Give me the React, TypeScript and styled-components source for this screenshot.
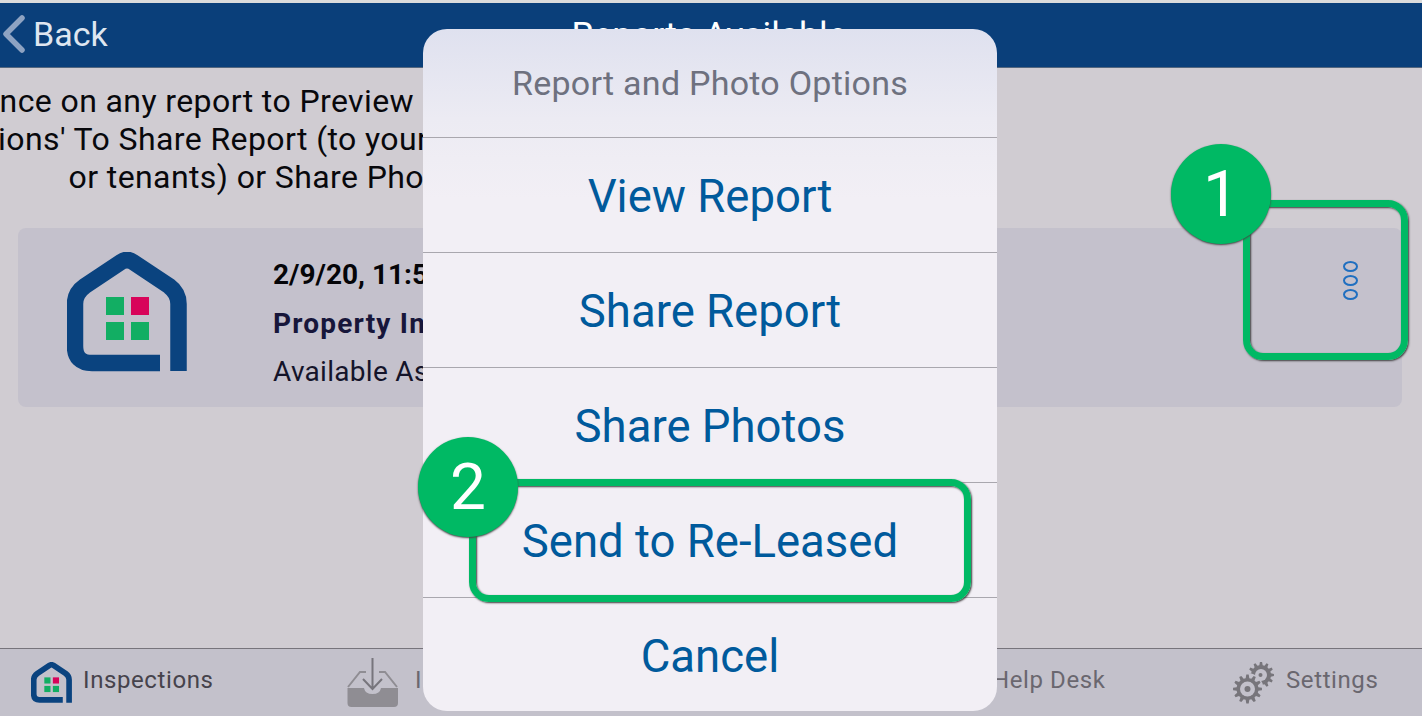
import React from 'react'
import styled, { createGlobalStyle } from 'styled-components'

const menuItems = ['View Report', 'Share Report', 'Share Photos', 'Send to Re-Leased', 'Cancel']

const gearPath = (cx: number, cy: number, outer: number, inner: number, teeth: number) => {
    const step = (Math.PI * 2) / teeth
    const points: string[] = []
    for (let i = 0; i < teeth; i++) {
        const a = i * step
        const pairs: [number, number][] = [
            [inner, a - step * 0.32],
            [outer, a - step * 0.16],
            [outer, a + step * 0.16],
            [inner, a + step * 0.32],
        ]
        pairs.forEach(([r, t]) => {
            points.push(`${(cx + r * Math.cos(t)).toFixed(2)} ${(cy + r * Math.sin(t)).toFixed(2)}`)
        })
    }
    return `M${points.join(' L')} Z`
}

const HouseLogo = ({ size }: { size: number }) => (
    <svg width={size} height={size} viewBox="0 0 120 120">
        <path
            d="M111.5 119 V52 Q111.5 41 102 34 L66 10 Q60 6 54 10 L18 34 Q8 41 8 52 V94 Q8 111 25 111 H93"
            fill="none"
            stroke="#0a437f"
            strokeWidth="16.5"
        />
        <rect x="39" y="45" width="18" height="18" fill="#12ae63" />
        <rect x="64" y="45" width="18" height="18" fill="#d8045a" />
        <rect x="39" y="70" width="18" height="18" fill="#12ae63" />
        <rect x="64" y="70" width="18" height="18" fill="#12ae63" />
    </svg>
)

const InboxIcon = () => (
    <svg width="52" height="50" viewBox="0 0 52 50">
        <path
            d="M0.5 30 H17 Q18 36 25.5 36 Q33 36 34 30 H51 V45 Q51 49 47 49 H4.5 Q0.5 49 0.5 45 Z"
            fill="#8f8d93"
        />
        <path d="M1 29 L13 14 H19 M32 14 H38 L50 29" fill="none" stroke="#8f8d93" strokeWidth="2" />
        <path d="M25.5 0 V31 M16 21 L25.5 31 L35 21" fill="none" stroke="#77757c" strokeWidth="2" />
    </svg>
)

const SettingsIcon = () => (
    <svg width="42" height="42" viewBox="0 0 42 42">
        <path d={gearPath(28, 13, 13, 10, 12)} fill="#77757b" />
        <circle cx="28" cy="13" r="6" fill="#c3c1cb" />
        <circle cx="27.5" cy="13" r="2" fill="#77757b" />
        <circle cx="14.5" cy="27" r="16" fill="#c3c1cb" />
        <path d={gearPath(14.5, 27, 14.5, 11, 12)} fill="#77757b" />
        <circle cx="14.5" cy="27" r="7.5" fill="#c3c1cb" />
        <circle cx="14.5" cy="27" r="3" fill="#77757b" />
    </svg>
)

const BackChevron = () => (
    <svg width="24" height="38" viewBox="0 0 24 38">
        <path d="M21 3 L5 19 L21 35" fill="none" stroke="#8ea3c2" strokeWidth="5.5" strokeLinecap="round" strokeLinejoin="round" />
    </svg>
)

const App = () => {
    return (
        <Page>
            <GlobalStyle />
            <Header>
                <BackLink>
                    <BackChevron />
                    <span>Back</span>
                </BackLink>
                <HeaderTitle>Reports Available</HeaderTitle>
            </Header>

            <Main>
                <Notice>
                    <div>Tap once on any report to Preview or use the menu for more</div>
                    <div>'Options' To Share Report (to your clients, owners, agents</div>
                    <div>or tenants) or Share Photos with others</div>
                </Notice>

                <ReportCard>
                    <LogoSlot>
                        <HouseLogo size={120} />
                    </LogoSlot>
                    <ReportText>
                        <ReportDate>2/9/20, 11:53 AM</ReportDate>
                        <ReportName>Property Inspection</ReportName>
                        <ReportStatus>Available As PDF</ReportStatus>
                    </ReportText>
                    <DotsButton>
                        <Dot />
                        <Dot />
                        <Dot />
                    </DotsButton>
                </ReportCard>
            </Main>

            <TabBar>
                <Tab>
                    <HouseLogo size={41} />
                    <TabLabel $dark>Inspections</TabLabel>
                </Tab>
                <Tab $gap={16}>
                    <InboxIcon />
                    <TabLabel>Inbox</TabLabel>
                </Tab>
                <Tab>
                    <TabLabel>Help Desk</TabLabel>
                </Tab>
                <Tab>
                    <SettingsIcon />
                    <TabLabel>Settings</TabLabel>
                </Tab>
            </TabBar>

            <Sheet>
                <SheetTitle>Report and Photo Options</SheetTitle>
                {menuItems.map(item => (
                    <SheetItem key={item}>{item}</SheetItem>
                ))}
            </Sheet>

            <Highlight $left={1243} $top={200} $width={165} $height={160} />
            <Highlight $left={469} $top={479} $width={502} $height={123} />
            <Badge $left={1171} $top={144}>1</Badge>
            <Badge $left={418} $top={437}>2</Badge>
        </Page>
    )
}

export default App

const GlobalStyle = createGlobalStyle`
    html, body {
        margin: 0;
        padding: 0;
        background: #d0ccd2;
    }
    * {
        box-sizing: border-box;
    }
`

const Page = styled.div`
    position: relative;
    width: 1422px;
    height: 716px;
    overflow: hidden;
    display: flex;
    flex-direction: column;
    background: #d0ccd2;
    border-top: 3px solid #dcdcdc;
    font-family: Roboto, "Liberation Sans", sans-serif;
`

const Header = styled.header`
    position: relative;
    height: 65px;
    flex: none;
    display: flex;
    align-items: center;
    padding-left: 1px;
    background: #0a3f7a;
    border-bottom: 1px solid #54677f;
`

const BackLink = styled.div`
    display: flex;
    align-items: center;
    gap: 8px;
    color: #dfe6f0;
    font-size: 34px;
    margin-top: -2px;
`

const HeaderTitle = styled.div`
    position: absolute;
    left: 0;
    right: 0;
    top: 11px;
    text-align: center;
    color: #ffffff;
    font-size: 35.5px;
    padding-right: 4px;
`

const Main = styled.main`
    flex: 1;
    display: flex;
    flex-direction: column;
    padding: 14px 20px 0 18px;
`

const Notice = styled.div`
    width: 1000px;
    margin-left: -163px;
    height: 146px;
    flex: none;
    text-align: center;
    white-space: nowrap;
    font-size: 32px;
    letter-spacing: 0.4px;
    line-height: 38px;
    color: #08080c;
`

const ReportCard = styled.section`
    height: 179px;
    display: grid;
    grid-template-columns: 255px 1fr 64px;
    align-items: center;
    background: #c4c1cc;
    border-radius: 8px;
`

const LogoSlot = styled.div`
    display: flex;
    padding-left: 49px;
    margin-bottom: 12px;
`

const ReportText = styled.div`
    display: flex;
    flex-direction: column;
    gap: 12.5px;
    margin-top: -1px;
    padding-top: 13px;
    white-space: nowrap;
    font-size: 28px;
    line-height: 36px;
`

const ReportDate = styled.div`
    font-weight: 700;
    color: #050508;
`

const ReportName = styled.div`
    font-weight: 700;
    letter-spacing: 1.2px;
    color: #17163a;
`

const ReportStatus = styled.div`
    letter-spacing: 0.3px;
    color: #14142a;
`

const DotsButton = styled.div`
    display: flex;
    flex-direction: column;
    align-items: center;
    gap: 3px;
    margin-bottom: 75px;
    margin-left: -40px;
`

const Dot = styled.span`
    width: 15px;
    height: 11px;
    border: 2px solid #1f6fc0;
    border-radius: 50%;
`

const TabBar = styled.nav`
    height: 68px;
    flex: none;
    display: grid;
    grid-template-columns: 316px 645px 241px auto;
    align-items: center;
    padding-left: 31px;
    background: #c3c1cb;
    border-top: 1px solid #77747c;
`

const Tab = styled.div<{ $gap?: number }>`
    display: flex;
    align-items: center;
    gap: ${props => props.$gap ?? 11}px;
`

const TabLabel = styled.span<{ $dark?: boolean }>`
    font-size: 24px;
    letter-spacing: 0.6px;
    margin-top: -5px;
    color: ${props => (props.$dark ? '#46434c' : '#6a676f')};
    white-space: nowrap;
`

const Sheet = styled.div`
    position: absolute;
    left: 423px;
    top: 26px;
    width: 574px;
    height: 682px;
    display: flex;
    flex-direction: column;
    border-radius: 24px;
    overflow: hidden;
    background: linear-gradient(180deg, #dfe1ef 0, #ecebf3 90px, #f2eff5 170px);
`

const SheetTitle = styled.div`
    height: 108px;
    flex: none;
    display: flex;
    align-items: center;
    justify-content: center;
    font-size: 34px;
    letter-spacing: 0.25px;
    color: #6e717f;
`

const SheetItem = styled.div`
    height: 115px;
    flex: none;
    display: flex;
    align-items: center;
    justify-content: center;
    padding-top: 3px;
    border-top: 1px solid #a9a7ae;
    font-size: 45.5px;
    color: #005a9c;
`

const Highlight = styled.div<{ $left: number; $top: number; $width: number; $height: number }>`
    position: absolute;
    left: ${props => props.$left}px;
    top: ${props => props.$top - 3}px;
    width: ${props => props.$width}px;
    height: ${props => props.$height}px;
    border: 7px solid #00b964;
    border-radius: 20px;
    box-shadow: 1px 1px 2px #3c3c3c, inset 1px 1px 2px #3c3c3c;
`

const Badge = styled.div<{ $left: number; $top: number }>`
    position: absolute;
    left: ${props => props.$left}px;
    top: ${props => props.$top - 3}px;
    width: 100px;
    height: 100px;
    display: flex;
    align-items: center;
    justify-content: center;
    border-radius: 50%;
    background: #00b964;
    box-shadow: 0 1px 2px #444444;
    color: #ffffff;
    font-size: 64px;
`
